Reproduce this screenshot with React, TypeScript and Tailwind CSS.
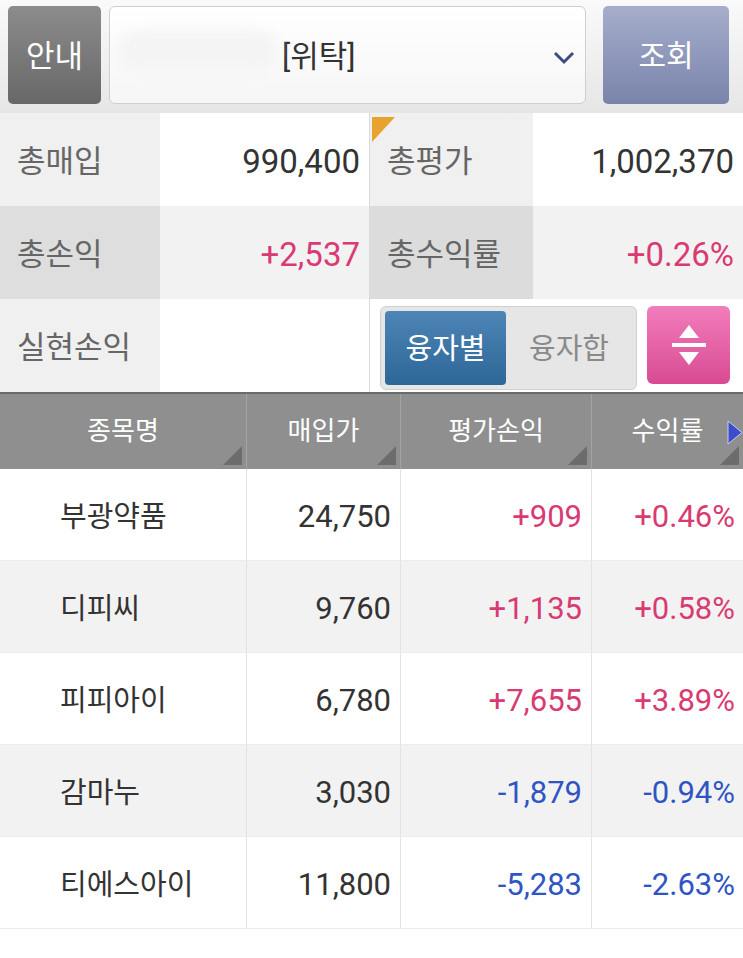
import React from "react";

const FONT = { fontFamily: '"Roboto", "Noto Sans CJK KR", "Noto Sans", sans-serif' };

const rows = [
  { name: "부광약품", price: "24,750", pl: "+909", rate: "+0.46%", up: true, bg: "bg-white" },
  { name: "디피씨", price: "9,760", pl: "+1,135", rate: "+0.58%", up: true, bg: "bg-[#f2f2f2]" },
  { name: "피피아이", price: "6,780", pl: "+7,655", rate: "+3.89%", up: true, bg: "bg-white" },
  { name: "감마누", price: "3,030", pl: "-1,879", rate: "-0.94%", up: false, bg: "bg-[#f2f2f2]" },
  { name: "티에스아이", price: "11,800", pl: "-5,283", rate: "-2.63%", up: false, bg: "bg-white" },
];

function Corner() {
  return (
    <svg className="absolute right-[4px] bottom-[4px]" width="19" height="19" viewBox="0 0 19 19">
      <polygon points="19,0 19,19 0,19" fill="#6c6c6c" />
    </svg>
  );
}

function HeaderCell({ label, border = true, children }: { label: string; border?: boolean; children?: React.ReactNode }) {
  return (
    <div className={`relative flex items-center justify-center h-full ${border ? "border-r border-[#a3a3a3]" : ""}`}>
      <span className="text-[26px] text-white leading-none -mt-[2px]">{label}</span>
      {children}
      <Corner />
    </div>
  );
}

export default function App() {
  return (
    <div className="w-[743px] h-[958px] bg-white overflow-hidden" style={FONT}>
      {/* Top bar */}
      <div className="h-[113px] flex items-start pt-[6px] pl-[8px] bg-gradient-to-b from-[#fafafa] to-[#e6e6e6]">
        <div className="w-[93px] h-[98px] rounded-[5px] bg-gradient-to-b from-[#8c8c8c] to-[#686868] flex items-center justify-center">
          <span className="text-[31px] text-white leading-none pt-[2px]">안내</span>
        </div>
        <div className="ml-[8px] w-[477px] h-[98px] rounded-[6px] border border-[#cfcfcf] bg-gradient-to-b from-white to-[#f6f6f6] relative flex items-center">
          <div className="absolute left-[8px] top-[24px] w-[160px] h-[40px] rounded-full bg-[#f4f4f4] blur-[6px]" />
          <span className="ml-[172px] text-[31px] text-[#333] leading-none pt-[2px]">[위탁]</span>
          <svg className="absolute left-[443px] top-[44px]" width="22" height="14" viewBox="0 0 22 14">
            <polyline points="2,2 11,11 20,2" fill="none" stroke="#3d4d80" strokeWidth="3" />
          </svg>
        </div>
        <div className="ml-[17px] w-[126px] h-[98px] rounded-[5px] bg-gradient-to-b from-[#a6aecb] to-[#7a84ab] flex items-center justify-center">
          <span className="text-[30px] text-white leading-none pt-[2px]">조회</span>
        </div>
      </div>

      {/* Summary grid */}
      <div className="grid grid-cols-[160px_210px_163px_210px] grid-rows-[93px_93px_93px]">
        <div className="bg-[#f0f0f0] flex items-center pl-[17px] pt-[6px] text-[31px] text-[#666]">총매입</div>
        <div className="bg-white flex items-center justify-end pr-[9px] pt-[4px] text-[33px] text-[#333] border-r border-[#dadada]">990,400</div>
        <div className="bg-[#f0f0f0] flex items-center pl-[17px] pt-[6px] text-[31px] text-[#666] relative">
          <svg className="absolute left-[2px] top-[4px]" width="23" height="25" viewBox="0 0 23 25">
            <polygon points="0,0 23,0 0,25" fill="#e8a32e" />
          </svg>
          총평가
        </div>
        <div className="bg-white flex items-center justify-end pr-[9px] pt-[4px] text-[33px] text-[#333]">1,002,370</div>

        <div className="bg-[#dedede] flex items-center pl-[17px] pt-[6px] text-[31px] text-[#666]">총손익</div>
        <div className="bg-[#f2f2f2] flex items-center justify-end pr-[9px] pt-[4px] text-[33px] text-[#d93a72] border-r border-[#dadada]">+2,537</div>
        <div className="bg-[#dcdcdc] flex items-center pl-[17px] pt-[6px] text-[31px] text-[#666]">총수익률</div>
        <div className="bg-[#f2f2f2] flex items-center justify-end pr-[9px] pt-[4px] text-[33px] text-[#d93a72]">+0.26%</div>

        <div className="bg-[#f0f0f0] flex items-center pl-[17px] pt-[6px] text-[31px] text-[#666]">실현손익</div>
        <div className="bg-white border-r border-[#dadada]" />
        <div className="col-span-2 bg-white flex items-start pt-[7px] pl-[10px]">
          <div className="w-[257px] h-[84px] rounded-[6px] border border-[#cfcfcf] bg-[#e6e6e6] flex items-stretch p-[4px]">
            <div className="w-[121px] rounded-[4px] bg-gradient-to-b from-[#4d85b6] to-[#2d6797] flex items-center justify-center">
              <span className="text-[29px] text-white leading-none pt-[2px]">융자별</span>
            </div>
            <div className="flex-1 flex items-center justify-center">
              <span className="text-[29px] text-[#8a8a8a] leading-none pt-[2px]">융자합</span>
            </div>
          </div>
          <div className="ml-[10px] w-[83px] h-[78px] rounded-[6px] bg-gradient-to-b from-[#f27cbc] to-[#d84a92] flex items-center justify-center">
            <svg width="38" height="46" viewBox="0 0 38 46">
              <polygon points="19,3 29,16 9,16" fill="white" />
              <rect x="2" y="21" width="34" height="4" fill="white" />
              <polygon points="9,30 29,30 19,43" fill="white" />
            </svg>
          </div>
        </div>
      </div>

      {/* Table header */}
      <div className="h-[77px] grid grid-cols-[247px_154px_191px_151px] bg-[#8f8f8f] border-t-[2px] border-[#6a6a6a]">
        <HeaderCell label="종목명" />
        <HeaderCell label="매입가" />
        <HeaderCell label="평가손익" />
        <HeaderCell label="수익률" border={false}>
          <svg className="absolute right-[0px] top-[26px]" width="16" height="25" viewBox="0 0 16 25">
            <polygon points="1,1 15,12.5 1,24" fill="#3d4cc8" stroke="#c9cdf0" strokeWidth="1" />
          </svg>
        </HeaderCell>
      </div>

      {/* Rows */}
      {rows.map((r) => {
        const c = r.up ? "text-[#d93a72]" : "text-[#2f55c4]";
        return (
          <div key={r.name} className={`h-[92px] grid grid-cols-[247px_154px_191px_151px] ${r.bg} border-b border-[#ececec]`}>
            <div className="flex items-center pl-[60px] pt-[7px] text-[29px] text-[#333] border-r border-[#e2e2e2]">{r.name}</div>
            <div className="flex items-center justify-end pr-[9px] pt-[5px] text-[31px] text-[#333] border-r border-[#e2e2e2]">{r.price}</div>
            <div className={`flex items-center justify-end pr-[9px] pt-[5px] text-[31px] ${c} border-r border-[#e2e2e2]`}>{r.pl}</div>
            <div className={`flex items-center justify-end pr-[8px] pt-[5px] text-[31px] ${c}`}>{r.rate}</div>
          </div>
        );
      })}
    </div>
  );
}
